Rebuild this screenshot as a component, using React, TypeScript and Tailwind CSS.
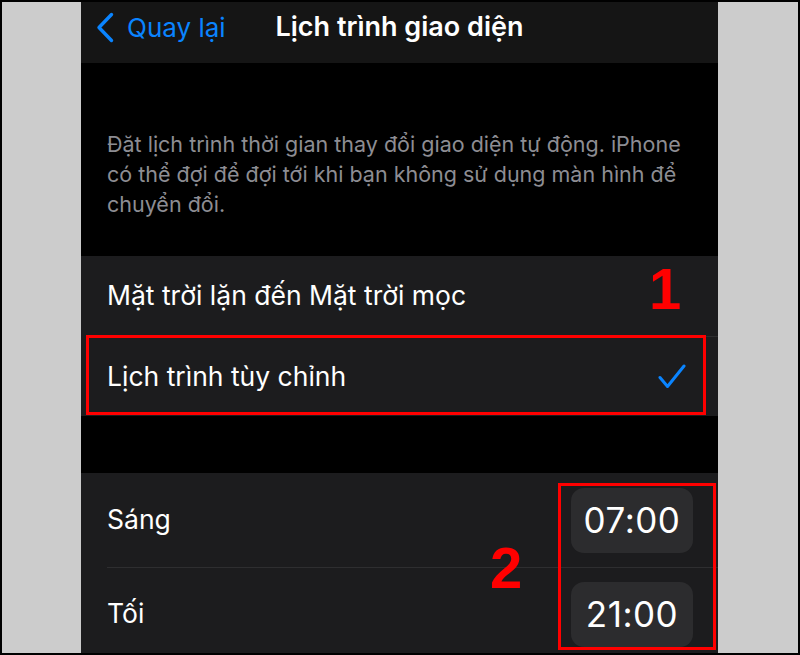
import React from 'react';

// ============================================
// Small drawings
// ============================================

const BackChevron: React.FC = () => (
  <svg width="18" height="31" viewBox="0 0 18 31" fill="none">
    <path d="M15.5 2.5 L3 15.5 L15.5 28.5" stroke="#0a84ff" strokeWidth="3.4" strokeLinecap="round" strokeLinejoin="round" />
  </svg>
);

const Check: React.FC = () => (
  <svg width="28" height="25" viewBox="0 0 28 25" fill="none">
    <path d="M2 13.5 L9.5 22.5 L26 2" stroke="#0a84ff" strokeWidth="3" strokeLinecap="round" strokeLinejoin="round" />
  </svg>
);

// ============================================
// Time pill
// ============================================

const TimePill: React.FC<{ value: string }> = ({ value }) => (
  <div className="w-[122px] h-[65px] rounded-[13px] bg-[#2c2c2e] flex items-center justify-center text-[35px] text-white tracking-[0.5px]">
    {value}
  </div>
);

// ============================================
// App
// ============================================

export default function App() {
  return (
    <div className="w-[800px] h-[655px] border-2 border-black bg-[#cccccc] flex overflow-hidden">
      <div className="ml-[79px] w-[637px] h-full bg-black flex flex-col overflow-hidden font-['Inter',sans-serif]">
        {/* Nav bar */}
        <div className="h-[61px] shrink-0 bg-[#151515]">
          <div className="h-[50px] grid grid-cols-[1fr_auto_1fr] items-center">
            <div className="flex items-center pl-[15px] gap-[13px] text-[#0a84ff]">
              <BackChevron />
              <span className="text-[26px]">Quay lại</span>
            </div>
            <h1 className="text-[27px] font-semibold text-white">Lịch trình giao diện</h1>
            <div />
          </div>
        </div>

        {/* Footer note */}
        <div className="h-[193px] shrink-0 pt-[66px] pl-[26px]">
          <p className="w-[578px] text-[21.5px] leading-[30px] text-[#8d8d93]">
            Đặt lịch trình thời gian thay đổi giao diện tự động. iPhone có thể đợi để đợi tới khi bạn không sử dụng màn hình để chuyển đổi.
          </p>
        </div>

        {/* Schedule options */}
        <div className="relative shrink-0 bg-[#1c1c1e]">
          <div className="h-[80px] flex items-center pl-[26px] text-[26.5px] text-white">
            Mặt trời lặn đến Mặt trời mọc
          </div>
          <div className="ml-[26px] h-px bg-[#2e2e30]" />
          <div className="relative h-[79px] flex items-center justify-between pl-[26px] pr-[32px] text-[26.5px] text-white">
            <span>Lịch trình tùy chỉnh</span>
            <Check />
            <div className="absolute left-[5px] right-[12px] top-[-2px] bottom-[1px] border-[3px] border-[#ff0000]" />
          </div>
          <span className="absolute left-[568px] top-[4px] font-['Liberation_Sans',sans-serif] font-bold text-[58px] leading-none text-[#ff0000]">
            1
          </span>
        </div>

        <div className="h-[57px] shrink-0" />

        {/* Times */}
        <div className="relative flex-1 bg-[#1c1c1e]">
          <div className="h-[94px] flex items-center justify-between pl-[26px] pr-[25px] text-[26.5px] text-white">
            <span>Sáng</span>
            <TimePill value="07:00" />
          </div>
          <div className="ml-[26px] h-px bg-[#2e2e30]" />
          <div className="h-[92px] flex items-center justify-between pl-[26px] pr-[25px] text-[26.5px] text-white">
            <span>Tối</span>
            <TimePill value="21:00" />
          </div>
          <div className="absolute left-[477px] top-[10px] w-[158px] h-[167px] border-[3px] border-[#ff0000]" />
          <span className="absolute left-[409px] top-[66px] font-['Liberation_Sans',sans-serif] font-bold text-[58px] leading-none text-[#ff0000]">
            2
          </span>
        </div>
      </div>
    </div>
  );
}
